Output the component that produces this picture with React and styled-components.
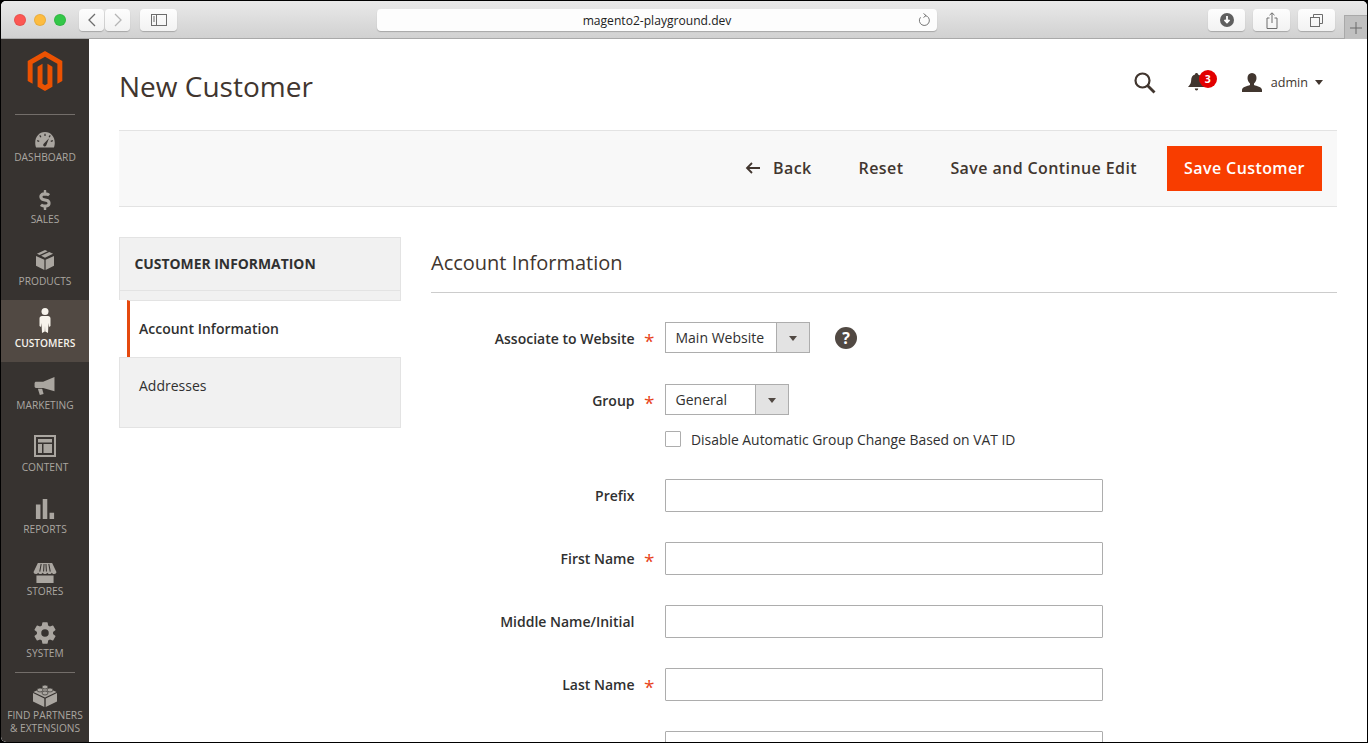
import React from 'react';
import styled, { createGlobalStyle } from 'styled-components';
import { SiMagento } from 'react-icons/si';
import { FaDollarSign } from 'react-icons/fa';
import { IoSettingsSharp } from 'react-icons/io5';

const GlobalStyle = createGlobalStyle`
  html, body {
    margin: 0;
    padding: 0;
    background: #000;
    overflow: hidden;
  }
  * { box-sizing: border-box; }
`;

const Page = styled.div`
  width: 1368px;
  height: 743px;
  background: #000;
  padding: 1px 1px 1px 1px;
  font-family: "Open Sans", sans-serif;
  color: #303030;
  overflow: hidden;
`;

const Win = styled.div`
  width: 100%;
  height: 100%;
  background: #fff;
  border-radius: 5px 5px 0 5px;
  overflow: hidden;
  display: flex;
  flex-direction: column;
`;

const TitleBar = styled.div`
  height: 38px;
  flex: none;
  display: flex;
  align-items: flex-start;
  padding: 8px 0 0 13px;
  background: linear-gradient(#e9e9e9, #d1d1d1);
  border-bottom: 1px solid #a9a9a9;
`;

const Light = styled.span`
  width: 12px;
  height: 12px;
  border-radius: 50%;
  margin: 5px 8px 0 0;
  background: ${p => p.$color};
  border: 1px solid rgba(0, 0, 0, 0.08);
`;

const ChromeBtn = styled.div`
  width: ${p => p.$w || 37}px;
  height: 22px;
  margin-left: ${p => p.$ml || 0}px;
  background: linear-gradient(#fdfdfd, #f2f2f2);
  border-radius: 4px;
  box-shadow: 0 1px 1px rgba(0, 0, 0, 0.22);
  display: flex;
  align-items: center;
  justify-content: center;
  color: #6d6d6d;
`;

const UrlBar = styled.div`
  width: 560px;
  height: 22px;
  margin-left: 200px;
  background: #fdfdfd;
  border-radius: 4px;
  box-shadow: 0 1px 1px rgba(0, 0, 0, 0.22);
  position: relative;
  display: flex;
  align-items: center;
  justify-content: center;
  font-size: 12.1px;
  color: #222;
`;

const Reload = styled.span`
  position: absolute;
  right: 6px;
  top: 4px;
  display: flex;
`;

const NewTab = styled.div`
  width: 23px;
  height: 24px;
  margin: 6px 0 0 9px;
  background: #c0c0c0;
  border-left: 1px solid #a9a9a9;
  border-top: 1px solid #a9a9a9;
  display: flex;
  align-items: center;
  justify-content: center;
  color: #6a6a6a;
`;

const Body = styled.div`
  flex: 1;
  display: flex;
  min-height: 0;
`;

const Sidebar = styled.nav`
  width: 88px;
  flex: none;
  background: #373330;
  border-bottom-left-radius: 5px;
  display: flex;
  flex-direction: column;
`;

const LogoWrap = styled.div`
  height: 75px;
  flex: none;
  display: flex;
  justify-content: center;
  padding: 12px 0 0 0;
  color: #eb5202;
`;

const SideRule = styled.div`
  height: 1px;
  flex: none;
  margin: 0 14px -1px;
  background: #736e6a;
  position: relative;
`;

const NavItem = styled.a`
  height: ${p => p.$h || 62}px;
  flex: none;
  display: flex;
  flex-direction: column;
  align-items: center;
  padding-top: ${p => p.$pt || 13}px;
  background: ${p => (p.$active ? '#514943' : 'transparent')};
  color: ${p => (p.$active ? '#f7f3eb' : '#aaa6a0')};
`;

const NavIcon = styled.div`
  height: 20px;
  flex: none;
  display: flex;
  align-items: center;
  justify-content: center;
  transform: translateY(${p => p.$shift || 0}px);
`;

const NavLabel = styled.span`
  font-size: 10.2px;
  line-height: 13px;
  margin-top: 4px;
  text-transform: uppercase;
  text-align: center;
  font-weight: ${p => (p.$active ? 600 : 400)};
  color: inherit;
  white-space: nowrap;
`;

const Main = styled.main`
  flex: 1;
  min-width: 0;
  padding: 0 30px;
`;

const Header = styled.header`
  height: 91px;
  display: flex;
  align-items: center;
  justify-content: space-between;
  padding-top: 3px;
`;

const Title = styled.h1`
  margin: 0;
  font-size: 28px;
  font-weight: 400;
  color: #41362f;
`;

const HeaderTools = styled.div`
  display: flex;
  align-items: center;
  padding: 0 14px 8px 0;
  color: #41362f;
`;

const SearchIcon = styled.svg`
  display: block;
  margin-top: 2px;
  fill: none;
  stroke: #41362f;
`;

const BellWrap = styled.div`
  position: relative;
  display: flex;
  margin-left: 32px;
`;

const Badge = styled.span`
  position: absolute;
  left: 11px;
  top: -3px;
  width: 18px;
  height: 18px;
  border-radius: 50%;
  background: #e20000;
  color: #fff;
  font-size: 10.5px;
  font-weight: 700;
  display: flex;
  align-items: center;
  justify-content: center;
`;

const UserIcon = styled.svg`
  margin-left: 37px;
  fill: #41362f;
`;

const UserName = styled.span`
  font-size: 12.6px;
  margin: 0 7px 0 9px;
`;

const Caret = styled.span`
  width: 0;
  height: 0;
  border-left: 4.5px solid transparent;
  border-right: 4.5px solid transparent;
  border-top: 5px solid #41362f;
`;

const ActionBar = styled.div`
  height: 77px;
  background: #f8f8f8;
  border-top: 1px solid #e3e3e3;
  border-bottom: 1px solid #e3e3e3;
  display: flex;
  align-items: center;
  justify-content: flex-end;
  padding-right: 15px;
  gap: 47px;
`;

const TextAction = styled.span`
  font-size: 16px;
  font-weight: 600;
  letter-spacing: 0.4px;
  padding-bottom: 2px;
  color: #41362f;
  display: flex;
  align-items: center;
  gap: 13px;
`;

const PrimaryBtn = styled.button`
  width: 155px;
  height: 45px;
  margin-left: -17px;
  padding: 0 0 2px;
  border: 0;
  background: #f83d00;
  color: #fff;
  font: 600 16px "Open Sans", sans-serif;
  letter-spacing: 0.4px;
`;

const Columns = styled.div`
  display: flex;
  gap: 30px;
  margin-top: 30px;
`;

const SidePanel = styled.aside`
  width: 282px;
  flex: none;
`;

const PanelHead = styled.div`
  height: 54px;
  background: #f1f1f1;
  border: 1px solid #e3e3e3;
  display: flex;
  align-items: center;
  padding: 0 0 2px 14.5px;
  font-size: 13.9px;
  font-weight: 700;
  color: #303030;
  text-transform: uppercase;
`;

const PanelGap = styled.div`
  height: 9px;
  background: #f1f1f1;
  border-right: 1px solid #e3e3e3;
  border-left: 1px solid #e3e3e3;
`;

const ActiveTab = styled.div`
  height: 57px;
  margin-left: 8px;
  background: #fff;
  border-left: 3px solid #e5490e;
  border-top: 1px solid #e3e3e3;
  display: flex;
  align-items: center;
  padding: 0 0 1px 9px;
  font-size: 14px;
  font-weight: 600;
  color: #303030;
`;

const Tab = styled.div`
  height: 71px;
  background: #f1f1f1;
  border: 1px solid #e3e3e3;
  padding: 18px 0 0 19px;
  font-size: 14px;
  color: #303030;
`;

const Content = styled.section`
  flex: 1;
  min-width: 0;
`;

const SectionTitle = styled.h2`
  margin: 0 0 29px;
  height: 56px;
  border-bottom: 1px solid #ccc;
  font-size: 20px;
  font-weight: 400;
  line-height: 51px;
  color: #41362f;
`;

const FieldRow = styled.div`
  display: grid;
  grid-template-columns: 204px 30px 1fr;
  margin-bottom: ${p => p.$mb ?? 30}px;
`;

const FieldLabel = styled.label`
  height: 33px;
  padding-right: 0.5px;
  display: flex;
  align-items: center;
  justify-content: flex-end;
  font-size: 14px;
  font-weight: 600;
  color: #303030;
`;

const Required = styled.span`
  height: 33px;
  padding: 5px 0 0 9px;
  display: flex;
  align-items: center;
  font-size: 19px;
  font-weight: 400;
  color: #e8441b;
`;

const TextInput = styled.input`
  display: block;
  width: 438px;
  height: 33px;
  border: 1px solid #adadad;
  border-radius: 1px;
  background: #fff;
`;

const SelectRow = styled.div`
  display: flex;
  align-items: flex-start;
`;

const Select = styled.div`
  width: ${p => p.$w}px;
  height: 31px;
  border: 1px solid #adadad;
  background: #fff;
  display: flex;
  align-items: center;
  font-size: 14px;
  color: #303030;
  padding-left: 9.5px;
`;

const SelectValue = styled.span`
  flex: 1;
  padding-bottom: 1px;
`;

const SelectArrow = styled.span`
  width: 33px;
  height: 100%;
  flex: none;
  background: #e3e3e3;
  border-left: 1px solid #adadad;
  display: flex;
  align-items: center;
  justify-content: center;
`;

const SmallCaret = styled.span`
  width: 0;
  height: 0;
  margin-top: 2px;
  border-left: 4px solid transparent;
  border-right: 4px solid transparent;
  border-top: 5px solid #514943;
`;

const HelpIcon = styled.span`
  width: 22px;
  height: 22px;
  margin: 5px 0 0 25px;
  border-radius: 50%;
  background: #514943;
  color: #fff;
  font-size: 16px;
  font-weight: 700;
  display: flex;
  align-items: center;
  justify-content: center;
`;

const CheckRow = styled.div`
  display: flex;
  align-items: center;
  height: 16px;
  margin-top: 16px;
  gap: 10px;
  font-size: 13.9px;
  color: #303030;
`;

const CheckBox = styled.span`
  width: 16px;
  height: 16px;
  flex: none;
  border: 1px solid #adadad;
  border-radius: 1px;
  background: #fff;
`;

const NAV = [
  {
    label: 'Dashboard',
    shift: 3,
    icon: (
      <svg width="22" height="16" viewBox="0 0 24 18" fill="currentColor">
        <path fillRule="evenodd" d="M12 0C5.4 0 1 5.4 1 12c0 2 .3 4 1 5.5h20c.7-1.500 1-3.500 1-5.500C23 5.400 18.600 0 12 0zM11.300 2h1.400v2.500h-1.400zM5.500 4.300l1.200-.8 1.300 2-1.200.8zM16 5.500l1.300-2 1.200.8-1.300 2zM3 10.500l.4-1.400 2.300.8-.4 1.300zM18.300 9.900l2.300-.8.4 1.400-2.300.7zM10.300 13.500c-.6 1-.3 2.100.6 2.600s2 .1 2.500-.8l3.100-8.300-6.200 6.500z" />
      </svg>
    ),
  },
  { label: 'Sales', shift: 1, icon: <FaDollarSign size={20} /> },
  {
    label: 'Products',
    shift: -1,
    icon: (
      <svg width="18" height="20" viewBox="0 0 20 22" fill="currentColor">
        <path d="M0 6.500l9.300 4.200V22L0 17.500zM20 6.500v11L10.700 22V10.700z" />
        <path d="M10 0l3 1.300-9 4.200-3-1.400zM14.700 2l4.300 2-9 4.400-4.300-2z" />
      </svg>
    ),
  },
  {
    label: 'Customers',
    shift: -3,
    icon: (
      <svg width="12" height="25" viewBox="0 0 12 25" fill="currentColor">
        <circle cx="6" cy="3.500" r="3.500" />
        <path d="M3 8h6c1.500 0 2.500 1 2.500 2.500V18l-1.500 1-.5-4 -.5 10-2.800-1.500L6 18l-.200 5.500L3 25l-.5-10-.5 4-1.500-1v-7.500C.500 9 1.500 8 3 8z" />
      </svg>
    ),
  },
  {
    label: 'Marketing',
    shift: 1,
    icon: (
      <svg width="22" height="18" viewBox="0 0 22 19" fill="currentColor">
        <path d="M21 0v15L9 11.500H1.500C.700 11.500 0 10.800 0 10V6.500C0 5.700.700 5 1.500 5H9z" />
        <path d="M3.500 12.500h4.500l1.500 5.500-4 1z" />
      </svg>
    ),
  },
  {
    label: 'Content',
    shift: -1,
    icon: (
      <svg width="22" height="22" viewBox="0 0 22 22" fill="none">
        <rect x="1" y="1" width="20" height="20" stroke="currentColor" strokeWidth="2" />
        <path fill="currentColor" d="M4 4h14v3.500H4zM4 9h4v9H4zM9.500 9H18v9H9.500z" />
      </svg>
    ),
  },
  {
    label: 'Reports',
    icon: (
      <svg width="20" height="20" viewBox="0 0 20 22" fill="currentColor">
        <path d="M0 6h5v16H0zM7.500 0h5v22h-5zM15 15h5v7h-5z" />
      </svg>
    ),
  },
  {
    label: 'Stores',
    shift: 2,
    icon: (
      <svg width="24" height="20" viewBox="0 0 24 21" fill="currentColor">
        <path d="M4.500 0h15L24 9.500c0 1.200-1 2-2.400 2-1 0-2-.5-2.400-1.300-.4.800-1.400 1.300-2.400 1.300s-2-.5-2.400-1.300c-.4.800-1.400 1.300-2.400 1.300s-2-.5-2.400-1.300c-.4.800-1.400 1.300-2.400 1.300s-2-.5-2.400-1.300C4.300 11 3.400 11.500 2.400 11.500 1 11.500 0 10.700 0 9.500z" />
        <path d="M3 13h18v8H3z" />
        <path stroke="#373330" strokeWidth="1.100" d="M8 1L6.500 9M11 1l-.5 8M13 1l.5 8M16 1l1.500 8" />
      </svg>
    ),
  },
  { label: 'System', icon: <IoSettingsSharp size={24} /> },
];

const LegoIcon = () => (
  <svg width="24" height="23" viewBox="0 0 24 23" fill="currentColor">
    <path d="M0 9l11.300 5.500V23L0 17.500zM24 9v8.500L12.700 23v-8.500z" />
    <path d="M12 2.500L23.500 8 12 13.500.5 8z" />
    <g stroke="#373330" strokeWidth=".7">
      <ellipse cx="12" cy="3" rx="3" ry="2" />
      <ellipse cx="7" cy="6" rx="3" ry="2" />
      <ellipse cx="17" cy="6" rx="3" ry="2" />
      <ellipse cx="12" cy="9" rx="3" ry="2" />
    </g>
  </svg>
);

const FIELDS = [
  { label: 'Prefix' },
  { label: 'First Name', required: true },
  { label: 'Middle Name/Initial' },
  { label: 'Last Name', required: true },
  { label: '' },
];

const App = () => {
  return (
    <Page>
      <GlobalStyle />
      <Win>
        <TitleBar>
          <Light $color="#fc5753" />
          <Light $color="#fdbc40" />
          <Light $color="#33c748" />
          <ChromeBtn $w={25} $ml={5}>
            <svg width="10" height="14" viewBox="0 0 10 14" fill="none" stroke="currentColor" strokeWidth="1.300">
              <path d="M8 1L2 7l6 6" />
            </svg>
          </ChromeBtn>
          <ChromeBtn $w={25} $ml={1}>
            <svg width="10" height="14" viewBox="0 0 10 14" fill="none" stroke="#b5b5b5" strokeWidth="1.300">
              <path d="M2 1l6 6-6 6" />
            </svg>
          </ChromeBtn>
          <ChromeBtn $ml={10}>
            <svg width="16" height="12" viewBox="0 0 16 12" fill="none" stroke="currentColor">
              <rect x=".5" y=".5" width="15" height="11" />
              <path d="M5.500 .5v11M2 3h2M2 5h2M2 7h2" />
            </svg>
          </ChromeBtn>
          <UrlBar>
            magento2-playground.dev
            <Reload>
              <svg width="14" height="14" viewBox="0 0 14 14" fill="none" stroke="#777" strokeWidth="1">
                <path d="M8 2.500a5 5 0 1 1-4.500 1.800" />
                <path d="M6.500 .5L9 2.500 6.500 4.500" />
              </svg>
            </Reload>
          </UrlBar>
          <ChromeBtn $ml={271}>
            <svg width="14" height="14" viewBox="0 0 14 14">
              <circle cx="7" cy="7" r="7" fill="#5f5f5f" />
              <path d="M7 3v6M4.500 6.800L7 9.500l2.500-2.700" fill="none" stroke="#fff" strokeWidth="1.800" />
            </svg>
          </ChromeBtn>
          <ChromeBtn $ml={8}>
            <svg width="12" height="17" viewBox="0 0 12 17" fill="none" stroke="currentColor">
              <path d="M3.500 6H1v10.500h10V6H8.500M6 11V1M3.500 3.200L6 .8l2.500 2.400" />
            </svg>
          </ChromeBtn>
          <ChromeBtn $ml={8}>
            <svg width="13" height="13" viewBox="0 0 13 13" fill="none" stroke="currentColor">
              <rect x=".5" y="3.500" width="9" height="9" />
              <path d="M3.500 3.500V.5h9v9h-3" />
            </svg>
          </ChromeBtn>
          <NewTab>
            <svg width="12" height="12" viewBox="0 0 12 12" stroke="currentColor">
              <path d="M6 0v12M0 6h12" />
            </svg>
          </NewTab>
        </TitleBar>
        <Body>
          <Sidebar>
            <LogoWrap>
              <SiMagento size={40} />
            </LogoWrap>
            <SideRule />
            {NAV.map(item => (
              <NavItem key={item.label} $active={item.label === 'Customers'}>
                <NavIcon $shift={item.shift}>{item.icon}</NavIcon>
                <NavLabel $active={item.label === 'Customers'}>{item.label}</NavLabel>
              </NavItem>
            ))}
            <SideRule />
            <NavItem $h={70} $pt={13}>
              <NavIcon>
                <LegoIcon />
              </NavIcon>
              <NavLabel>
                Find Partners
                <br />
                &amp; Extensions
              </NavLabel>
            </NavItem>
          </Sidebar>
          <Main>
            <Header>
              <Title>New Customer</Title>
              <HeaderTools>
                <SearchIcon width="22" height="22" viewBox="0 0 22 22">
                  <circle cx="8.500" cy="8.500" r="7" strokeWidth="2.200" />
                  <path d="M13.500 13.500l7 7" strokeWidth="2.800" />
                </SearchIcon>
                <BellWrap>
                  <svg width="17" height="18" viewBox="0 0 17 18" fill="#41362f">
                    <path d="M8.500 0c1 0 1.500.7 1.500 1.400 2.600.7 3.800 2.900 3.800 5.600 0 3 1 4.500 3.200 7H0c2.200-2.500 3.200-4 3.200-7 0-2.700 1.200-4.900 3.800-5.600C7 .7 7.500 0 8.500 0z" />
                    <path d="M6.800 15.500h3.400c0 1-.7 2-1.700 2s-1.700-1-1.700-2z" />
                  </svg>
                  <Badge>3</Badge>
                </BellWrap>
                <UserIcon width="20" height="19" viewBox="0 0 20 19">
                  <path d="M10 0c3 0 4.500 2.200 4.500 5 0 2.400-1.200 4.600-2.500 5.500v1.500c2.500 1 8 2 8 5v2H0v-2c0-3 5.500-4 8-5v-1.500C6.700 9.600 5.500 7.400 5.500 5 5.500 2.200 7 0 10 0z" />
                </UserIcon>
                <UserName>admin</UserName>
                <Caret />
              </HeaderTools>
            </Header>
            <ActionBar>
              <TextAction>
                <svg width="15" height="12" viewBox="0 0 15 12" fill="none" stroke="#41362f" strokeWidth="1.800">
                  <path d="M15 6H2M7 1L2 6l5 5" />
                </svg>
                Back
              </TextAction>
              <TextAction>Reset</TextAction>
              <TextAction>Save and Continue Edit</TextAction>
              <PrimaryBtn>Save Customer</PrimaryBtn>
            </ActionBar>
            <Columns>
              <SidePanel>
                <PanelHead>Customer Information</PanelHead>
                <PanelGap />
                <ActiveTab>Account Information</ActiveTab>
                <Tab>Addresses</Tab>
              </SidePanel>
              <Content>
                <SectionTitle>Account Information</SectionTitle>
                <FieldRow $mb={29}>
                  <FieldLabel>Associate to Website</FieldLabel>
                  <Required>*</Required>
                  <SelectRow>
                    <Select $w={145}>
                      <SelectValue>Main Website</SelectValue>
                      <SelectArrow>
                        <SmallCaret />
                      </SelectArrow>
                    </Select>
                    <HelpIcon>?</HelpIcon>
                  </SelectRow>
                </FieldRow>
                <FieldRow $mb={32}>
                  <FieldLabel>Group</FieldLabel>
                  <Required>*</Required>
                  <div>
                    <Select $w={124}>
                      <SelectValue>General</SelectValue>
                      <SelectArrow>
                        <SmallCaret />
                      </SelectArrow>
                    </Select>
                    <CheckRow>
                      <CheckBox />
                      Disable Automatic Group Change Based on VAT ID
                    </CheckRow>
                  </div>
                </FieldRow>
                {FIELDS.map((field, i) => (
                  <FieldRow key={i}>
                    <FieldLabel>{field.label}</FieldLabel>
                    <Required>{field.required ? '*' : ''}</Required>
                    <TextInput />
                  </FieldRow>
                ))}
              </Content>
            </Columns>
          </Main>
        </Body>
      </Win>
    </Page>
  );
};

export default App;
